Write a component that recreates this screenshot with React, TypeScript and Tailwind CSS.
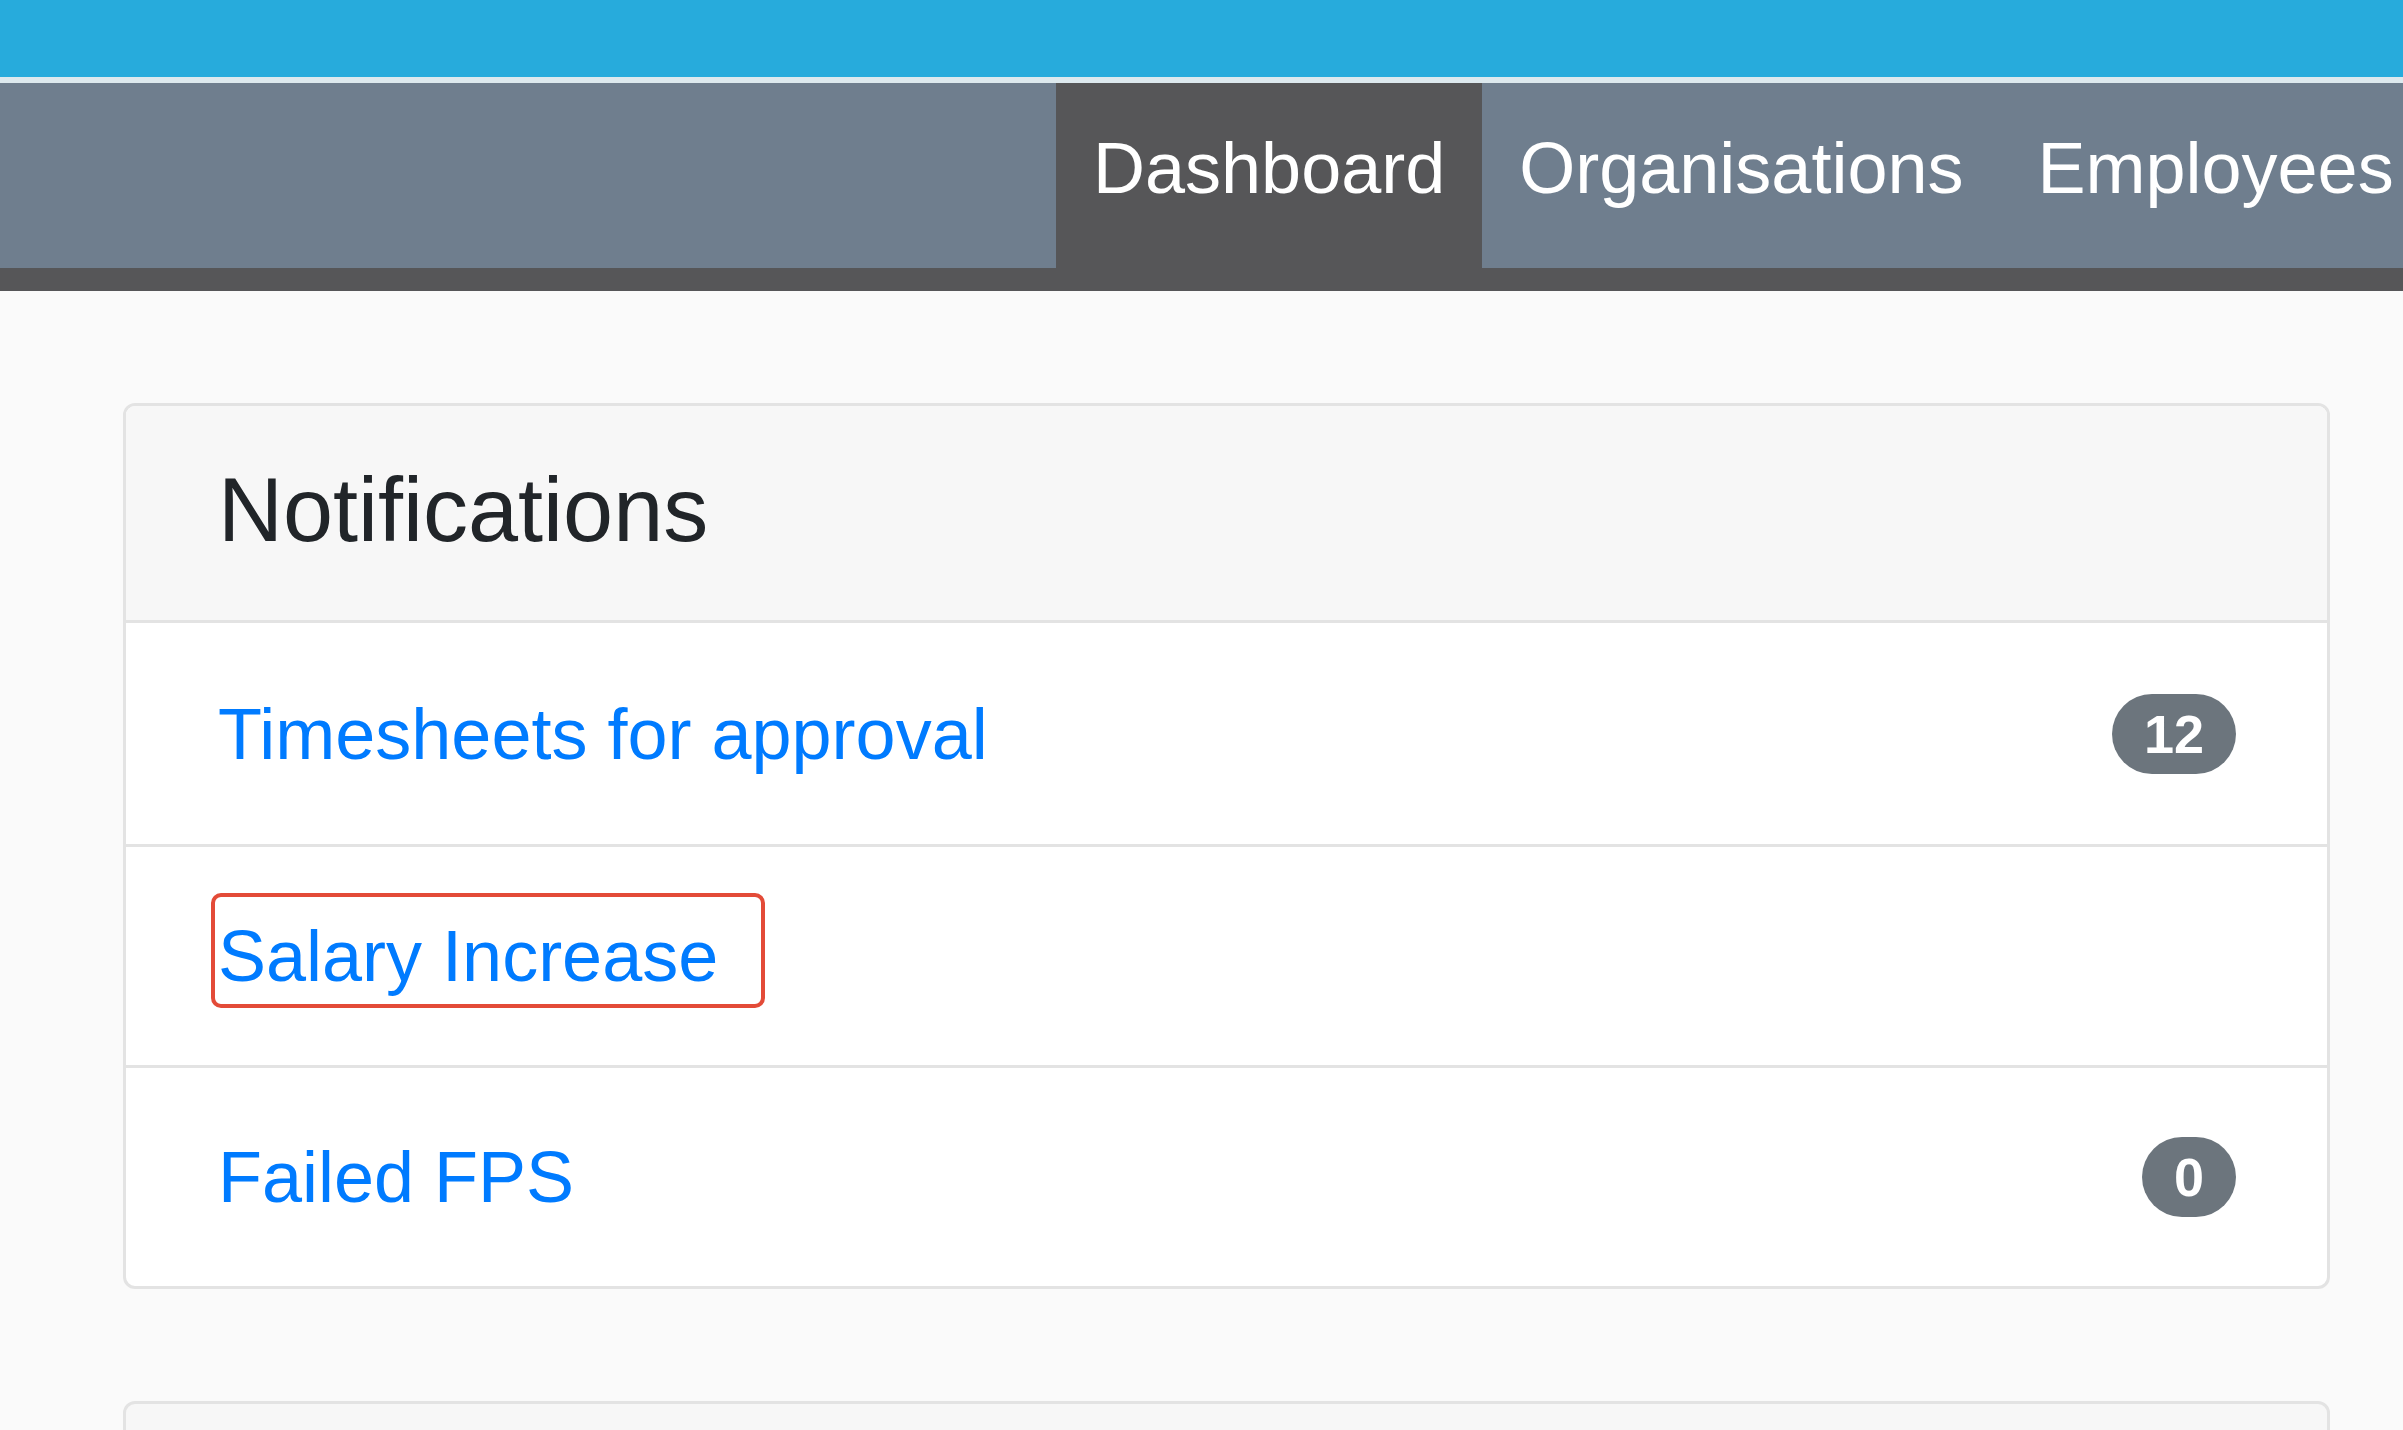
const notifications = [
  { label: "Timesheets for approval", count: 12 },
  { label: "Salary Increase", count: null, highlighted: true },
  { label: "Failed FPS", count: 0 },
];

const tabs = [
  { label: "Dashboard", active: true },
  { label: "Organisations", active: false },
  { label: "Employees", active: false },
];

function NavBar() {
  return (
    <div className="bg-[#565658] pb-[23px]">
      <div className="flex h-[185px] overflow-hidden bg-[#6f7e8e] pl-[1056px]">
        {tabs.map((tab) => (
          <a
            key={tab.label}
            href="#"
            className={`shrink-0 whitespace-nowrap px-[37px] pt-[49px] text-[72px] leading-none text-white ${
              tab.active ? "bg-[#565658]" : ""
            }`}
          >
            {tab.label}
          </a>
        ))}
      </div>
    </div>
  );
}

function NotificationRow({
  label,
  count,
  highlighted,
  first,
}: {
  label: string;
  count: number | null;
  highlighted?: boolean;
  first: boolean;
}) {
  return (
    <div
      className={`flex h-[221px] items-center justify-between pl-[92px] pr-[91px] ${
        first ? "" : "border-t-[3px] border-[#e3e3e3]"
      }`}
    >
      <span className="relative">
        <a href="#" className="text-[72px] leading-[108px] text-[#007bff]">
          {label}
        </a>
        {/* annotation box drawn over the link */}
        {highlighted && (
          <span className="pointer-events-none absolute -top-[9px] -left-[7px] h-[115px] w-[554px] rounded-[10px] border-[4px] border-[#e34b38]" />
        )}
      </span>
      {count !== null && (
        <span className="rounded-full bg-[#6c757d] px-[32px] py-[13px] text-[54px] font-bold leading-none text-white">
          {count}
        </span>
      )}
    </div>
  );
}

export default function App() {
  return (
    <div className="h-[1430px] w-full overflow-hidden bg-[#fafafa] font-['Liberation_Sans',Arial,sans-serif]">
      <div className="h-[77px] bg-[#27abdc]" />
      <div className="h-[6px] bg-[#dde9ee]" />
      <NavBar />

      <div className="ml-[123px] w-[2207px] pt-[112px]">
        {/* Notifications card */}
        <div className="overflow-hidden rounded-[12px] border-[3px] border-[#e3e3e3] bg-white">
          <div className="h-[217px] border-b-[3px] border-[#e3e3e3] bg-[#f7f7f7] pl-[92px] pt-[59px]">
            <h3 className="text-[90px] leading-none text-[#212529]">Notifications</h3>
          </div>
          {notifications.map((n, i) => (
            <NotificationRow
              key={n.label}
              label={n.label}
              count={n.count}
              highlighted={n.highlighted}
              first={i === 0}
            />
          ))}
        </div>

        {/* next card, cut off by the window */}
        <div className="mt-[112px] h-[216px] rounded-t-[12px] border-[3px] border-[#e3e3e3] bg-[#f7f7f7]" />
      </div>
    </div>
  );
}
